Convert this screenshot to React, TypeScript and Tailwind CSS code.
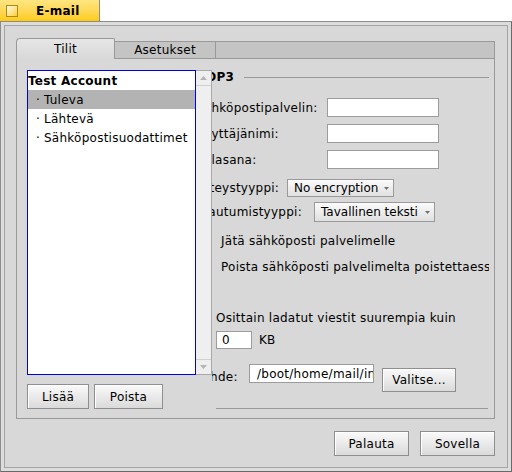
import React from 'react';
import { clsx } from 'clsx';

const Btn = ({ label, className }: { label: string; className?: string }) => (
  <div
    className={clsx(
      'flex shrink-0 items-center justify-center border border-[#8f8f8f] bg-linear-to-b from-[#fafafa] to-[#dadada] shadow-[inset_1px_1px_0_#ffffff]',
      className
    )}
  >
    {label}
  </div>
);

const Field = ({ value, className }: { value?: string; className?: string }) => (
  <div
    className={clsx(
      'flex shrink-0 items-center overflow-hidden whitespace-nowrap border border-[#9c9c9c] bg-white',
      className
    )}
  >
    {value}
  </div>
);

const Menu = ({ label, className }: { label: string; className?: string }) => (
  <div
    className={clsx(
      'flex shrink-0 items-center border border-[#9a9a9a] bg-linear-to-b from-[#fbfbfb] to-[#e0e0e0]',
      className
    )}
  >
    <span className="flex-1 whitespace-nowrap pl-[6px] tracking-[0px]">{label}</span>
    <svg width="5" height="3" viewBox="0 0 5 3" className="mr-[4px]">
      <path d="M0 0h5L2.5 3z" fill="#707070" />
    </svg>
  </div>
);

const ScrollArrow = ({ up }: { up?: boolean }) => (
  <div className={clsx('flex h-[15px] items-center justify-center', up ? 'border-b border-[#d0d0d0]' : 'border-t border-[#d0d0d0]')}>
    <svg width="7" height="4" viewBox="0 0 7 4">
      <path d={up ? 'M0 4L3.5 0L7 4z' : 'M0 0L3.5 4L7 0z'} fill="#b4b4b4" />
    </svg>
  </div>
);

const AccountList = () => (
  <div className="flex w-[185px] flex-col">
    <div className="flex h-[305px]">
      <div className="w-[169px] border border-[#0000e0] bg-white">
        <div className="flex h-[19px] items-center font-bold">Test Account</div>
        {['Tuleva', 'Lähtevä', 'Sähköpostisuodattimet'].map((item, i) => (
          <div key={item} className={clsx('flex h-[19px] items-center pl-[8px]', i === 0 && 'bg-[#b3b3b3]')}>
            <span className="w-[8px]">·</span>
            <span>{item}</span>
          </div>
        ))}
      </div>
      <div className="flex w-[16px] flex-col justify-between border-t border-r border-b border-[#a9a9a9] bg-[#efefef]">
        <ScrollArrow up />
        <ScrollArrow />
      </div>
    </div>
    <div className="mt-[9px] flex gap-[5px]">
      <Btn label="Lisää" className="h-[25px] w-[62px]" />
      <Btn label="Poista" className="h-[25px] w-[69px]" />
    </div>
  </div>
);

const Pop3Panel = () => (
  <div className="flex w-[277px] flex-col overflow-hidden whitespace-nowrap">
    <div className="mt-[10px] flex h-[16px] items-center">
      <span className="ml-[-15px] font-bold">POP3</span>
      <div className="ml-[10px] h-px flex-1 bg-[#9a9a9a]" />
    </div>

    {['Sähköpostipalvelin:', 'Käyttäjänimi:', 'Salasana:'].map((label, i) => (
      <div key={label} className={clsx('flex h-[19px] items-center', i === 0 ? 'mt-[13px]' : 'mt-[7px]')}>
        <span className="ml-[-16px] w-[131px] shrink-0">{label}</span>
        <Field className="h-[19px] w-[112px]" />
      </div>
    ))}

    <div className="mt-[10px] flex h-[18px] items-center">
      <span className="ml-[-18px] w-[93px] shrink-0">Yhteystyyppi:</span>
      <Menu label="No encryption" className="h-[18px] w-[107px]" />
    </div>
    <div className="mt-[5px] flex h-[20px] items-center">
      <span className="ml-[-48px] w-[150px] shrink-0">Tunnistautumistyyppi:</span>
      <Menu label="Tavallinen teksti" className="h-[20px] w-[121px]" />
    </div>

    <div className="mt-[11px] flex h-[16px] items-center pl-[9px]">Jätä sähköposti palvelimelle</div>
    <div className="mt-[10px] flex h-[16px] items-center pl-[9px]">Poista sähköposti palvelimelta poistettaessa</div>

    <div className="mt-[35px] flex h-[16px] items-center pl-[4px]">Osittain ladatut viestit suurempia kuin</div>
    <div className="mt-[5px] flex h-[18px] items-center pl-[4px]">
      <Field value="0" className="h-[18px] w-[36px] pl-[5px]" />
      <span className="ml-[7px]">KB</span>
    </div>

    <div className="mt-[15px] flex h-[28px] items-start">
      <span className="ml-[-17px] mt-[4px] w-[54px] shrink-0 leading-[19px]">Kohde:</span>
      <Field value="/boot/home/mail/in" className="h-[19px] w-[125px] pl-[7px]" />
      <Btn label="Valitse..." className="ml-[8px] mt-[4px] h-[24px] w-[74px]" />
    </div>

    <div className="ml-[4px] mt-[16px] h-px w-[272px] bg-[#9a9a9a]" />
  </div>
);

const TabView = () => (
  <div>
    <div className="flex h-[21px] items-end">
      <div className="flex h-[21px] w-[99px] items-center justify-center rounded-tl-[4px] rounded-tr-[2px] border-t border-r border-l border-[#999999] bg-linear-to-b from-[#e6e6e6] to-[#d8d8d8]">
        Tilit
      </div>
      <div className="flex h-[18px] w-[101px] items-center justify-center border-t border-r border-b border-[#999999] bg-[#c4c4c4]">
        Asetukset
      </div>
      <div className="h-[18px] flex-1 border-t border-r border-b border-[#999999] bg-[#c4c4c4]" />
    </div>
    <div className="flex h-[360px] border-r border-b border-l border-[#999999] pt-[11px] pl-[10px]">
      <AccountList />
      <div className="-mt-[11px]">
        <Pop3Panel />
      </div>
    </div>
  </div>
);

export default function App() {
  return (
    <div className="h-[472px] w-[512px] bg-white font-['DejaVu_Sans','Liberation_Sans',sans-serif] text-[12px] leading-none tracking-[0.25px] text-black select-none">
      <div className="flex h-[21px] w-[100px] items-center border-r border-[#8d8d8d] bg-linear-to-b from-[#ffe680] to-[#ffcb00]">
        <div className="ml-[6px] h-[12px] w-[12px] border border-[#a88c1c] bg-linear-to-br from-[#fffbe0] to-[#ffcc10]" />
        <span className="ml-[18px] font-bold">E-mail</span>
      </div>
      <div className="h-[451px] border border-[#8c8c8c] border-r-[#6a6a6a] border-b-[#6a6a6a] bg-[#dcdcdc] p-[3px]">
        <div className="h-full border border-[#a4a4a4] bg-[#d8d8d8] pt-[12px] pr-[12px] pl-[11px]">
          <TabView />
          <div className="mt-[12px] flex justify-end gap-[11px]">
            <Btn label="Palauta" className="h-[25px] w-[75px]" />
            <Btn label="Sovella" className="h-[25px] w-[75px]" />
          </div>
        </div>
      </div>
    </div>
  );
}
